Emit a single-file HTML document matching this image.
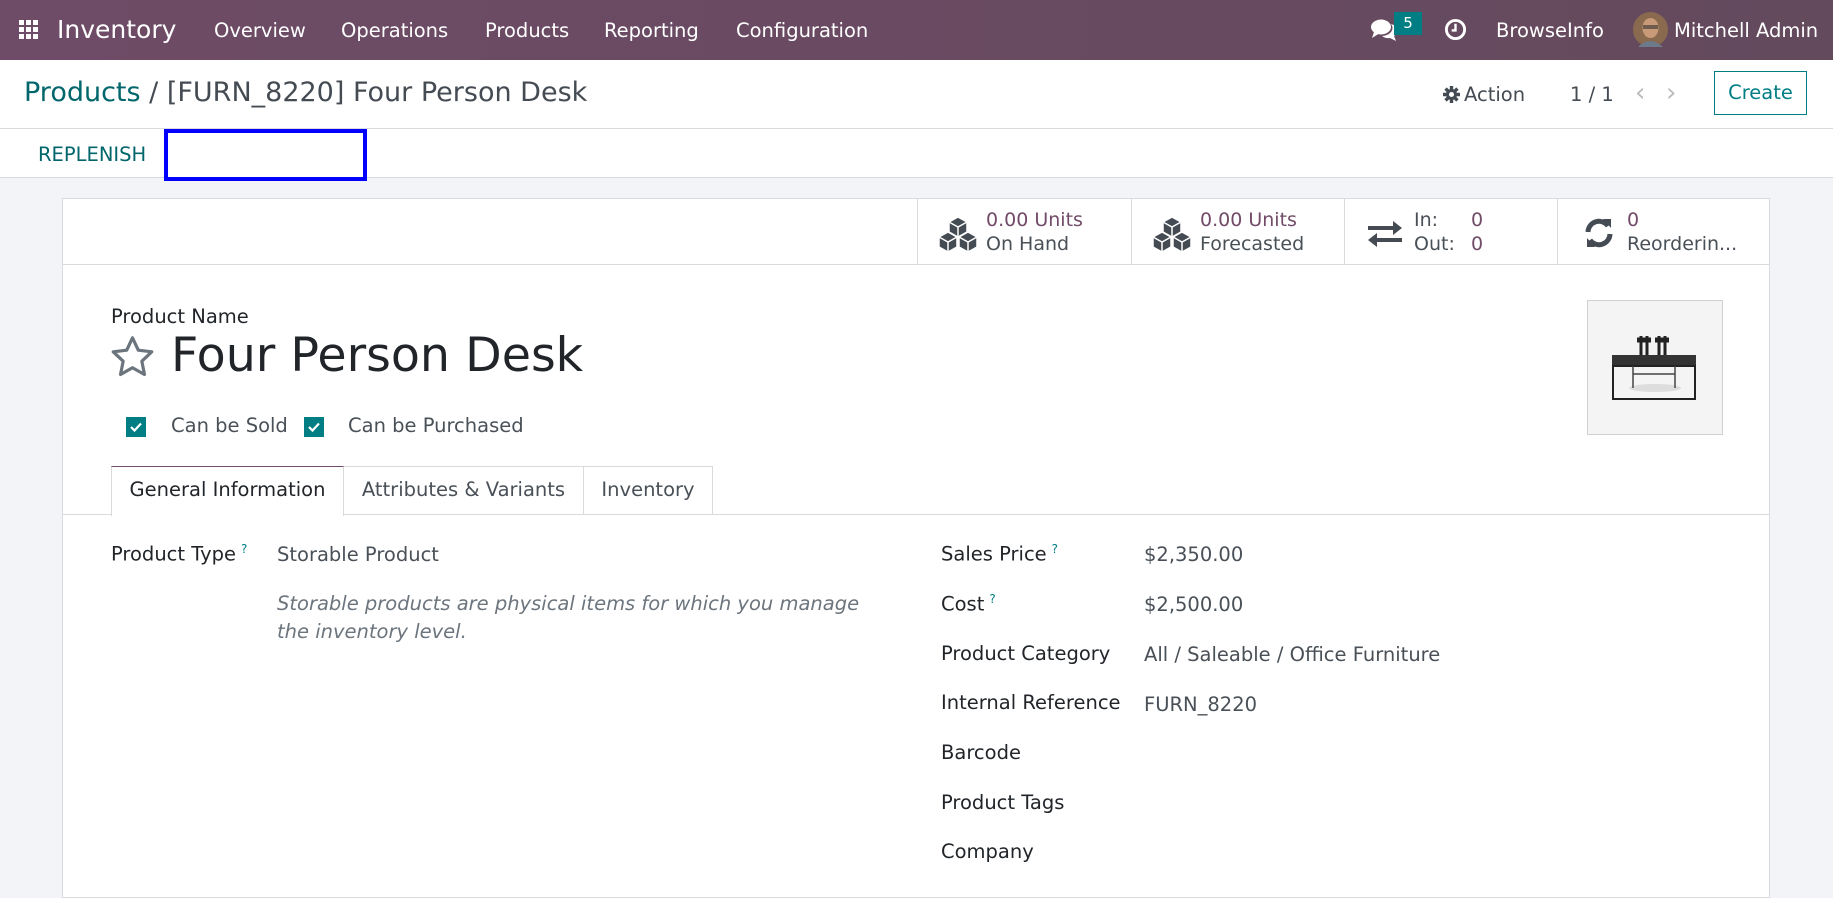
<!DOCTYPE html>
<html><head><meta charset="utf-8">
<style>
*{box-sizing:border-box;margin:0;padding:0}
body{width:1833px;height:877px;overflow:hidden;background:#f3f4f7;font-family:"DejaVu Sans","Liberation Sans",sans-serif;color:#212529;position:relative;font-size:19.5px}
.a{position:absolute;white-space:nowrap}
#nav{left:0;top:0;width:1833px;height:60px;background:linear-gradient(90deg,#6e4b66,#644a5d);color:#fff}
#cp{left:0;top:60px;width:1833px;height:118px;background:#fff;border-bottom:1px solid #d8dadd}
.t{color:#017e84}
.p{color:#714b67}
.g{color:#495057}
</style></head><body>
<div id="nav" class="a">
  <svg class="a" style="left:19px;top:20px" width="20" height="20" viewBox="0 0 20 20" fill="#fff">
    <rect x="0" y="0" width="5" height="5"/><rect x="7" y="0" width="5" height="5"/><rect x="14" y="0" width="5" height="5"/>
    <rect x="0" y="7" width="5" height="5"/><rect x="7" y="7" width="5" height="5"/><rect x="14" y="7" width="5" height="5"/>
    <rect x="0" y="14" width="5" height="5"/><rect x="7" y="14" width="5" height="5"/><rect x="14" y="14" width="5" height="5"/>
  </svg>
  <div class="a" style="left:57px;top:15px;font-size:25px">Inventory</div>
  <div class="a" style="left:214px;top:19px">Overview</div>
  <div class="a" style="left:341px;top:19px">Operations</div>
  <div class="a" style="left:485px;top:19px">Products</div>
  <div class="a" style="left:604px;top:19px">Reporting</div>
  <div class="a" style="left:736px;top:19px">Configuration</div>
  <svg class="a" style="left:1371px;top:18px" width="26" height="24" viewBox="0 0 26 24" fill="#fff">
    <ellipse cx="10" cy="9" rx="10" ry="7.5"/><path d="M3 14 L1 20 L9 15Z"/>
    <path d="M20 6 a9 7 0 0 1 3 12 l2 5 -6-3 a9 7 0 0 1-8-2 a11 8 0 0 0 9-12z"/>
  </svg>
  <div class="a" style="left:1394px;top:12px;width:28px;height:23px;background:#017e84;color:#fff;font-size:15px;text-align:center;line-height:23px">5</div>
  <svg class="a" style="left:1444px;top:18px" width="23" height="23" viewBox="0 0 24 24"><circle cx="12" cy="12" r="9.5" fill="none" stroke="#fff" stroke-width="3"/><path d="M12 6v7h-4" fill="none" stroke="#fff" stroke-width="2.5"/></svg>
  <div class="a" style="left:1496px;top:19px">BrowseInfo</div>
  <svg class="a" style="left:1633px;top:12px" width="35" height="35" viewBox="0 0 35 35"><circle cx="17.5" cy="17.5" r="17.5" fill="#8a6a4e"/><ellipse cx="17.5" cy="16" rx="8" ry="10" fill="#c99a78"/><rect x="10" y="13" width="15" height="4" fill="#333" opacity=".6"/><path d="M5 35 q12-12 25 0z" fill="#6d7a8a"/></svg>
  <div class="a" style="left:1674px;top:19px">Mitchell Admin</div>
</div>

<div id="cp" class="a">
  <div class="a" style="left:24px;top:17px;font-size:27px;color:#444b53"><span style="color:#01666b">Products</span> / [FURN_8220] Four Person Desk</div>
  <svg class="a" style="left:1443px;top:26px" width="17" height="17" viewBox="0 0 20 20"><circle cx="10" cy="10" r="6.5" fill="#444b53"/><g stroke="#444b53" stroke-width="4"><path d="M10 0v20M0 10h20M3 3l14 14M17 3L3 17"/></g><circle cx="10" cy="10" r="3" fill="#fff"/></svg>
  <div class="a" style="left:1464px;top:23px;color:#444b53">Action</div>
  <div class="a" style="left:1570px;top:23px;color:#444b53">1 / 1</div>
  <div class="a" style="left:1635px;top:18px;color:#bbb;font-size:26px">&#x2039;</div>
  <div class="a" style="left:1666px;top:18px;color:#bbb;font-size:26px">&#x203A;</div>
  <div class="a" style="left:1714px;top:11px;width:93px;height:44px;border:1px solid #017e84;color:#017e84;text-align:center;line-height:42px">Create</div>
  <div class="a" style="left:0;top:68px;width:1833px;border-top:1px solid #d8dadd"></div>
  <div class="a" style="left:38px;top:83px;font-size:19.5px;color:#01666b">REPLENISH</div>
  <div class="a" style="left:164px;top:69px;width:203px;height:52px;border:4px solid #0000ff"></div>
</div>

<div class="a" style="left:62px;top:198px;width:1708px;height:700px;background:#fff;border:1px solid #d8dadd">
  <div class="a" style="left:0;top:0;width:1706px;height:66px;border-bottom:1px solid #d8dadd"></div>
  <div class="a" style="left:854px;top:0;height:66px;border-left:1px solid #d8dadd"></div>
  <div class="a" style="left:1068px;top:0;height:66px;border-left:1px solid #d8dadd"></div>
  <div class="a" style="left:1281px;top:0;height:66px;border-left:1px solid #d8dadd"></div>
  <div class="a" style="left:1494px;top:0;height:66px;border-left:1px solid #d8dadd"></div>
  <svg class="a" style="left:874px;top:17px" width="42" height="36" viewBox="0 0 42 36" fill="#444b53" stroke="#fff" stroke-width="1.5">
    <path d="M21 1 l9 5 v10 l-9 5 -9-5 V6z"/><path d="M11 16 l9 5 v10 l-9 5 -9-5 V21z"/><path d="M31 16 l9 5 v10 l-9 5 -9-5 V21z"/>
    <path d="M12 6 l9 5 9-5 M21 11v10 M2 21 l9 5 9-5 M11 26v10 M22 21 l9 5 9-5 M31 26v10" fill="none"/>
  </svg>
  <div class="a p" style="left:923px;top:10px;font-size:19px">0.00 Units</div>
  <div class="a g" style="left:923px;top:34px;font-size:19px">On Hand</div>
  <svg class="a" style="left:1088px;top:17px" width="42" height="36" viewBox="0 0 42 36" fill="#444b53" stroke="#fff" stroke-width="1.5">
    <path d="M21 1 l9 5 v10 l-9 5 -9-5 V6z"/><path d="M11 16 l9 5 v10 l-9 5 -9-5 V21z"/><path d="M31 16 l9 5 v10 l-9 5 -9-5 V21z"/>
    <path d="M12 6 l9 5 9-5 M21 11v10 M2 21 l9 5 9-5 M11 26v10 M22 21 l9 5 9-5 M31 26v10" fill="none"/>
  </svg>
  <div class="a p" style="left:1137px;top:10px;font-size:19px">0.00 Units</div>
  <div class="a g" style="left:1137px;top:34px;font-size:19px">Forecasted</div>
  <svg class="a" style="left:1305px;top:22px" width="34" height="26" viewBox="0 0 34 26" fill="#444b53">
    <rect x="0" y="5" width="26" height="4"/><path d="M25 0 l9 7 -9 7z"/><rect x="8" y="17" width="26" height="4"/><path d="M9 12 l-9 7 9 7z"/>
  </svg>
  <div class="a g" style="left:1351px;top:10px;font-size:19px">In:</div>
  <div class="a g" style="left:1351px;top:34px;font-size:19px">Out:</div>
  <div class="a p" style="left:1408px;top:10px;font-size:19px">0</div>
  <div class="a p" style="left:1408px;top:34px;font-size:19px">0</div>
  <svg class="a" style="left:1521px;top:18px" width="30" height="32" viewBox="0 0 30 32" fill="none" stroke="#444b53" stroke-width="5">
    <path d="M4 15 a11 11 0 0 1 20-6"/><path d="M26 17 a11 11 0 0 1-20 6"/>
    <path d="M19 2 l8 0 0 9z" fill="#444b53" stroke="none"/><path d="M11 30 l-8 0 0-9z" fill="#444b53" stroke="none"/>
  </svg>
  <div class="a p" style="left:1564px;top:10px;font-size:19px">0</div>
  <div class="a g" style="left:1564px;top:34px;font-size:19px">Reorderin...</div>

  <div class="a" style="left:48px;top:106px;font-size:19.5px">Product Name</div>
  <svg class="a" style="left:47px;top:136px" width="45" height="43" viewBox="0 0 24 23"><path d="M12 1.5 l3.1 6.6 7.2.9 -5.3 5 1.4 7.1 -6.4-3.6 -6.4 3.6 1.4-7.1 -5.3-5 7.2-.9z" fill="none" stroke="#6c757d" stroke-width="1.7" stroke-linejoin="round"/></svg>
  <div class="a" style="left:108px;top:129px;font-size:47.5px;color:#212529">Four Person Desk</div>

  <div class="a" style="left:63px;top:218px;width:20px;height:20px;background:#017e84"></div>
  <svg class="a" style="left:63px;top:218px" width="20" height="20"><path d="M5 10 l3.5 3.5 6.5-7" fill="none" stroke="#fff" stroke-width="2.2"/></svg>
  <div class="a g" style="left:108px;top:215px">Can be Sold</div>
  <div class="a" style="left:241px;top:218px;width:20px;height:20px;background:#017e84"></div>
  <svg class="a" style="left:241px;top:218px" width="20" height="20"><path d="M5 10 l3.5 3.5 6.5-7" fill="none" stroke="#fff" stroke-width="2.2"/></svg>
  <div class="a g" style="left:285px;top:215px">Can be Purchased</div>

  <div class="a" style="left:1524px;top:101px;width:136px;height:135px;background:#f5f4f4;border:1px solid #d0d0d6"></div>
  <svg class="a" style="left:1524px;top:101px" width="136" height="135" viewBox="0 0 136 135">
    <ellipse cx="68" cy="88" rx="26" ry="4" fill="#ddd"/>
    <path d="M54 36 v22 M60 36 v22 M72 36 v22 M78 36 v22" stroke="#222" stroke-width="3"/>
    <path d="M50 40 h14 M68 40 h14" stroke="#222" stroke-width="5"/>
    <rect x="25" y="55" width="84" height="11" fill="#333"/>
    <rect x="26" y="66" width="82" height="33" fill="none" stroke="#222" stroke-width="2"/>
    <path d="M46 66 v22 M88 66 v22 M46 74 h42" stroke="#444" stroke-width="1.5"/>
  </svg>

  <div class="a" style="left:0;top:315px;width:1706px;border-top:1px solid #d8dadd"></div>
  <div class="a" style="left:48px;top:267px;width:233px;height:50px;background:#fff;border:1px solid #d8dadd;border-top:1px solid #714b67;border-bottom:none;text-align:center;line-height:46px">General Information</div>
  <div class="a g" style="left:281px;top:267px;width:240px;height:49px;border:1px solid #d8dadd;border-left:none;text-align:center;line-height:46px">Attributes &amp; Variants</div>
  <div class="a g" style="left:521px;top:267px;width:129px;height:49px;border:1px solid #d8dadd;border-left:none;text-align:center;line-height:46px">Inventory</div>

  <div class="a" style="left:48px;top:343px">Product Type<sup class="t" style="font-size:12px;margin-left:5px">?</sup></div>
  <div class="a g" style="left:214px;top:344px">Storable Product</div>
  <div class="a" style="left:214px;top:391px;font-style:italic;color:#6c757d;line-height:28px;white-space:normal;width:620px">Storable products are physical items for which you manage the inventory level.</div>

  <div class="a" style="left:878px;top:343px">Sales Price<sup class="t" style="font-size:12px;margin-left:5px">?</sup></div>
  <div class="a g" style="left:1081px;top:344px">$2,350.00</div>
  <div class="a" style="left:878px;top:393px">Cost<sup class="t" style="font-size:12px;margin-left:5px">?</sup></div>
  <div class="a g" style="left:1081px;top:394px">$2,500.00</div>
  <div class="a" style="left:878px;top:443px">Product Category</div>
  <div class="a g" style="left:1081px;top:444px">All / Saleable / Office Furniture</div>
  <div class="a" style="left:878px;top:492px">Internal Reference</div>
  <div class="a g" style="left:1081px;top:494px">FURN_8220</div>
  <div class="a" style="left:878px;top:542px">Barcode</div>
  <div class="a" style="left:878px;top:592px">Product Tags</div>
  <div class="a" style="left:878px;top:641px">Company</div>
</div>
</body></html>
